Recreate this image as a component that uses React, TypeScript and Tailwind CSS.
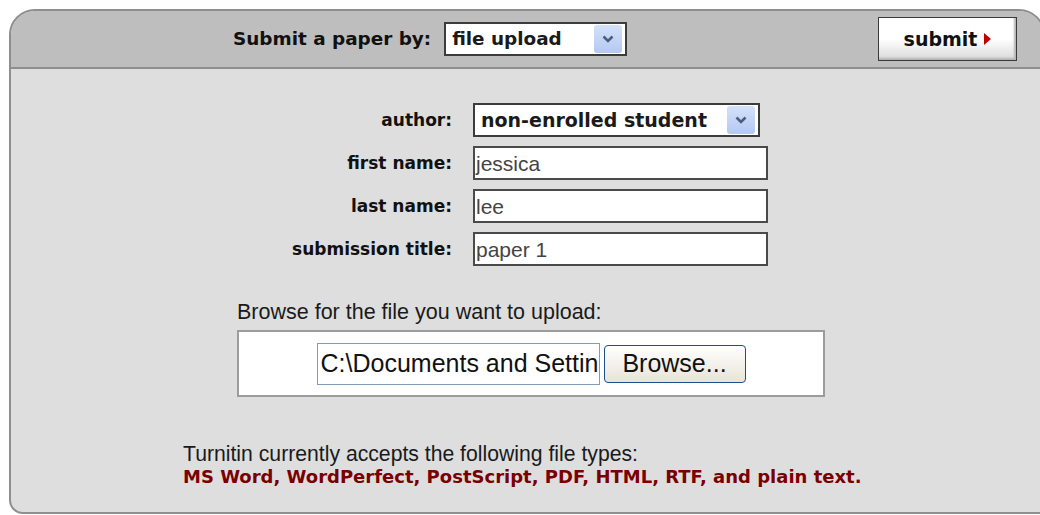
import { useState } from "react"

// bold labels use a Verdana-like face, field text an Arial-like one
const boldFace = "font-['DejaVu_Sans',Verdana,sans-serif] font-bold"
const plainFace = "font-['Liberation_Sans',Arial,sans-serif]"

function DropArrow() {
  return (
    <span className="flex h-[28px] w-[28px] items-center justify-center rounded-[3px] bg-gradient-to-b from-[#d3e1fa] to-[#b4c9f2]">
      <svg width="12" height="8" viewBox="0 0 12 8">
        <path d="M1.5 1.5 L6 6 L10.5 1.5" fill="none" stroke="#4b5d82" strokeWidth="2.6" />
      </svg>
    </span>
  )
}

function SelectBox({ value, width, size }: { value: string; width: string; size: string }) {
  return (
    <div className={`flex h-[34px] ${width} items-center justify-between border-2 border-[#3c3c3c] bg-white pl-[6px] pr-[3px]`}>
      <span className={`${boldFace} ${size} leading-none text-[#1a1a1a]`}>{value}</span>
      <DropArrow />
    </div>
  )
}

function FieldLabel({ children }: { children: string }) {
  return (
    <span className={`${boldFace} w-[236px] pr-[21px] text-right text-[17px] leading-none text-[#111]`}>{children}</span>
  )
}

function TextRow({ label, value }: { label: string; value: string }) {
  return (
    <div className="flex items-center">
      <FieldLabel>{label}</FieldLabel>
      <div className="flex h-[34px] w-[295px] items-center border-2 border-[#4a4a4a] bg-white pl-[1px]">
        <span className={`${plainFace} text-[21px] leading-none text-[#444]`}>{value}</span>
      </div>
    </div>
  )
}

export default function App() {
  const [mode] = useState("file upload")

  return (
    <div className="h-[515px] w-[1040px] overflow-hidden bg-white pl-[9px] pt-[9px]">
      <div className="flex h-[505px] w-[1036px] flex-col overflow-hidden rounded-tl-[26px] rounded-tr-[26px] rounded-bl-[14px] border-2 border-[#8e8e8e] bg-[#dedede]">
        {/* header strip */}
        <div className="flex h-[58px] shrink-0 items-center border-b-2 border-[#8e8e8e] bg-[#bebebe] pl-[222px] pr-[26px]">
          <span className={`${boldFace} text-[18.4px] leading-none text-[#111]`}>Submit a paper by:</span>
          <div className="ml-[13px]">
            <SelectBox value={mode} width="w-[183px]" size="text-[18.4px]" />
          </div>
          <button className="ml-auto flex h-[44px] w-[139px] items-center justify-center gap-[7px] border border-[#3a3a3a] bg-gradient-to-b from-white via-white to-[#d9d9d9] shadow-[inset_-2px_-2px_2px_#b5b5b5]">
            <span className={`${boldFace} text-[19px] leading-none text-[#111]`}>submit</span>
            <svg width="7" height="12" viewBox="0 0 7 12">
              <path d="M0 0 L7 6 L0 12 Z" fill="#c00000" />
            </svg>
          </button>
        </div>

        {/* form body */}
        <div className="flex flex-col pl-[226px] pt-[34px]">
          <div className="flex flex-col gap-[9px]">
            <div className="flex items-center">
              <FieldLabel>author:</FieldLabel>
              <SelectBox value="non-enrolled student" width="w-[287px]" size="text-[19px]" />
            </div>
            <TextRow label="first name:" value="jessica" />
            <TextRow label="last name:" value="lee" />
            <TextRow label="submission title:" value="paper 1" />
          </div>

          <p className={`${plainFace} mt-[34px] text-[21.5px] leading-[24px] text-[#1a1a1a]`}>
            Browse for the file you want to upload:
          </p>
          <div className="mt-[6px] flex h-[67px] w-[588px] items-center justify-center gap-[4px] border-2 border-[#9c9c9c] bg-white">
            <div className="flex h-[42px] w-[283px] items-center overflow-hidden border border-[#7f9db9] bg-white pl-[3px]">
              <span className={`${plainFace} whitespace-nowrap text-[25px] leading-none text-[#111]`}>C:\Documents and Settings</span>
            </div>
            <button className={`${plainFace} h-[38px] w-[142px] rounded-[4px] border border-[#1c4f8c] bg-gradient-to-b from-white to-[#e7e4d8] text-[25px] leading-none text-[#111]`}>
              Browse...
            </button>
          </div>
        </div>

        <div className="flex flex-col pl-[172px] pt-[45px]">
          <p className={`${plainFace} text-[21.2px] leading-[23px] text-[#1a1a1a]`}>
            Turnitin currently accepts the following file types:
          </p>
          <p className={`${boldFace} text-[18px] leading-[23px] text-[#7a0000]`}>
            MS Word, WordPerfect, PostScript, PDF, HTML, RTF, and plain text.
          </p>
        </div>
      </div>
    </div>
  )
}
